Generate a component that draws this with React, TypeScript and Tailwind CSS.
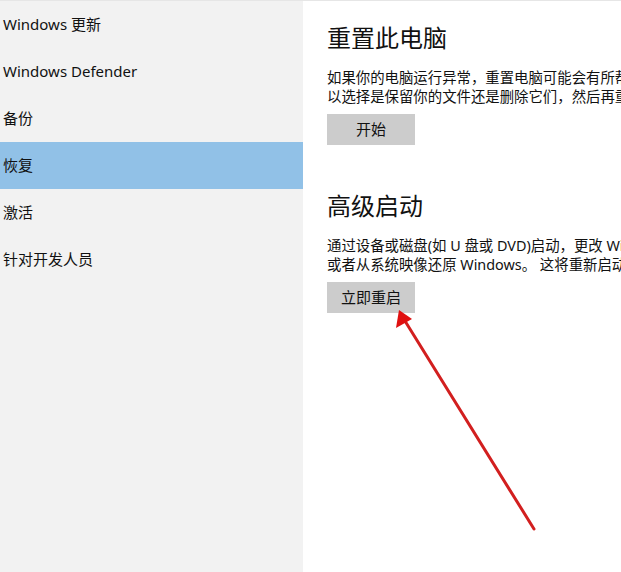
import React from 'react'

const navItems = ['Windows 更新', 'Windows Defender', '备份', '恢复', '激活', '针对开发人员']
const ACTIVE = '恢复'

const font = { fontFamily: '"Noto Sans", "Noto Sans CJK SC", sans-serif' }

const Section: React.FC<{ title: string; lines: string[]; button: string }> = ({ title, lines, button }) => (
  <section>
    <h2 className="text-[24px] leading-[32px] text-[#111]">{title}</h2>
    <div className="mt-[14px] text-[14.4px] leading-[19px] text-[#111]">
      {lines.map((l) => (
        <div key={l} className="whitespace-nowrap">
          {l}
        </div>
      ))}
    </div>
    <button className="mt-[8px] w-[88px] h-[31px] bg-[#cccccc] text-[15px] text-[#111]">{button}</button>
  </section>
)

export default function App() {
  return (
    <div className="relative w-[621px] h-[572px] overflow-hidden bg-white border-t border-[#e6e6e6] flex" style={font}>
      {/* 左侧导航 */}
      <nav className="w-[303px] shrink-0 bg-[#f2f2f2] flex flex-col">
        {navItems.map((item) => (
          <div
            key={item}
            className={`h-[47px] flex items-center pl-[3px] text-[15px] text-[#111] ${item === ACTIVE ? 'bg-[#91c1e7]' : ''}`}
          >
            {item}
          </div>
        ))}
      </nav>

      {/* 右侧内容 */}
      <main className="flex-1 min-w-0 overflow-hidden pl-[24px] pt-[21px] flex flex-col gap-[45px]">
        <Section
          title="重置此电脑"
          lines={[
            '如果你的电脑运行异常，重置电脑可能会有所帮助。重置时，你可',
            '以选择是保留你的文件还是删除它们，然后再重新安装 Windows。',
          ]}
          button="开始"
        />
        <Section
          title="高级启动"
          lines={[
            '通过设备或磁盘(如 U 盘或 DVD)启动，更改 Windows 启动设置，',
            '或者从系统映像还原 Windows。 这将重新启动电脑。',
          ]}
          button="立即重启"
        />
      </main>

      {/* 红色箭头标注 */}
      <svg className="absolute inset-0 pointer-events-none" width="621" height="572" viewBox="0 0 621 572">
        <line x1="534" y1="528" x2="405" y2="320" stroke="#d21f1f" strokeWidth="3" strokeLinecap="round" />
        <polygon points="399,309 396,327 412,318" fill="#e01010" />
      </svg>
    </div>
  )
}
